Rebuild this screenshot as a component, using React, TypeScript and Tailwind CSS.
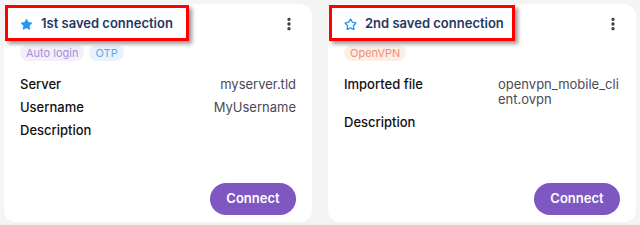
import React from 'react';
import { Star, EllipsisVertical } from 'lucide-react';

type Chip = { label: string; cls: string };

interface CardProps {
  title: string;
  filled: boolean;
  chips: Chip[];
  boxWidth: string;
  children: React.ReactNode;
}

const Card: React.FC<CardProps> = ({ title, filled, chips, boxWidth, children }) => {
  return (
    <div className="relative bg-white rounded-xl flex flex-col h-[218px] px-4 pt-[10px] pb-[7px]">
      <div className="flex items-center justify-between h-5">
        <div className="flex items-center gap-2">
          <Star
            className="w-[13px] h-[13px] text-[#2196f3]"
            strokeWidth={filled ? 1 : 2.4}
            fill={filled ? '#2196f3' : 'none'}
          />
          <span className="text-[13px] font-semibold text-[#1f3864]">{title}</span>
        </div>
        <EllipsisVertical className="w-4 h-4 text-[#333] mr-[-1px]" strokeWidth={3} />
      </div>
      <div className="flex gap-[5px] mt-[11px] h-4">
        {chips.map((c) => (
          <span key={c.label} className={`px-[6px] rounded-full text-[11px] leading-4 ${c.cls}`}>
            {c.label}
          </span>
        ))}
      </div>
      <div className="flex flex-col gap-2 mt-4 text-[13px] leading-[15px]">{children}</div>
      <div className="mt-auto flex justify-end">
        <button className="w-[86px] h-8 rounded-full bg-[#7e57c2] text-white text-[13px] font-semibold">
          Connect
        </button>
      </div>
      <div
        className={`absolute left-[1px] top-[1px] h-[36px] border-[3.5px] border-[#ff0000] shadow-[3px_3px_4px_rgba(0,0,0,0.4)] ${boxWidth}`}
      />
    </div>
  );
};

export default function App() {
  return (
    <div
      className="w-[640px] h-[225px] bg-[#f4f4f4] p-1 grid grid-cols-2 gap-4"
      style={{ fontFamily: 'Inter, "Noto Sans", sans-serif' }}
    >
      <Card
        title="1st saved connection"
        filled
        boxWidth="w-[184px]"
        chips={[
          { label: 'Auto login', cls: 'bg-[#f3effb] text-[#a48fd6]' },
          { label: 'OTP', cls: 'bg-[#e8f2fd] text-[#62a6e6]' },
        ]}
      >
        <div className="flex justify-between">
          <span className="font-medium text-[#111]">Server</span>
          <span className="text-[#4a4a55]">myserver.tld</span>
        </div>
        <div className="flex justify-between">
          <span className="font-medium text-[#111]">Username</span>
          <span className="text-[#4a4a55]">MyUsername</span>
        </div>
        <div className="flex justify-between">
          <span className="font-medium text-[#111]">Description</span>
        </div>
      </Card>
      <Card
        title="2nd saved connection"
        filled={false}
        boxWidth="w-[186px]"
        chips={[{ label: 'OpenVPN', cls: 'bg-[#fdeee8] text-[#f19070]' }]}
      >
        <div className="flex justify-between">
          <span className="font-medium text-[#111]">Imported file</span>
          <span className="w-[122px] break-all text-[#4a4a55]">openvpn_mobile_client.ovpn</span>
        </div>
        <div className="flex justify-between">
          <span className="font-medium text-[#111]">Description</span>
        </div>
      </Card>
    </div>
  );
}
